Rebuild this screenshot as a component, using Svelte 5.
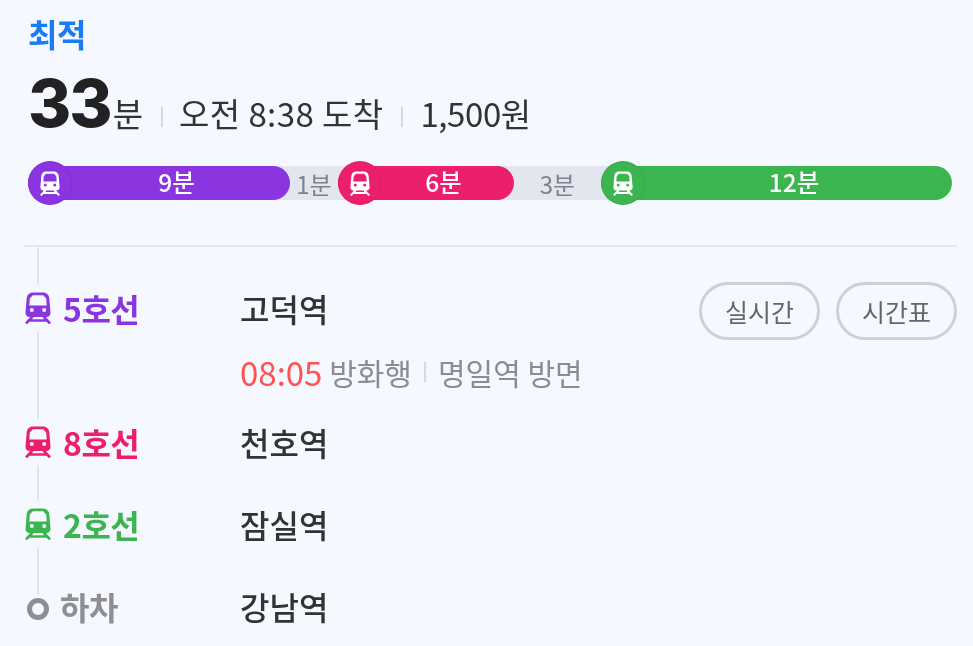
<script>
  const segments = [
    { kind: 'ride', label: '9분', color: '#8a35e0', width: 262 },
    { kind: 'walk', label: '1분', width: 48 },
    { kind: 'ride', label: '6분', color: '#ec1f6e', width: 176 },
    { kind: 'walk', label: '3분', width: 87 },
    { kind: 'ride', label: '12분', color: '#3bb54f', width: 351 }
  ];
</script>

{#snippet train()}
  <svg class="train" viewBox="0 0 26 32" aria-hidden="true">
    <path fill="currentColor" fill-rule="evenodd" d="M8 0.500h10c3.600 0 6 2.400 6.300 6L25.500 20.500c0.100 2.600-1.500 4.500-4 4.500H4.500c-2.500 0-4.100-1.900-4-4.500L1.700 6.500C2 2.900 4.400 0.500 8 0.500zM7.800 3.300 4.800 6.500 4.300 13.500H21.700L21.200 6.500 18.200 3.300zM6.800 16a2 2 0 1 0 0 4 2 2 0 0 0 0-4zM19.200 16a2 2 0 1 0 0 4 2 2 0 0 0 0-4z"/>
    <path fill="none" stroke="currentColor" stroke-width="2.600" d="M7.500 24.500 1 31.500M18.500 24.500l6.500 7M4.500 28.500h17"/>
  </svg>
{/snippet}

<main class="page">
  <div class="tag">최적</div>

  <div class="summary">
    <strong class="minutes">33</strong><span class="unit">분</span>
    <i class="sep first"></i>
    <span class="arrival">오전 8:38 도착</span>
    <i class="sep"></i>
    <span class="price">1,500원</span>
  </div>

  <div class="bar">
    <div class="track"></div>
    {#each segments as seg}
      {#if seg.kind === 'ride'}
        <div class="ride" style="width:{seg.width}px;background:{seg.color}">
          <span class="badge" style="background:{seg.color}">{@render train()}</span>
          <span class="ride-label">{seg.label}</span>
        </div>
      {:else}
        <div class="walk" style="width:{seg.width}px">{seg.label}</div>
      {/if}
    {/each}
  </div>

  <div class="route">
    <div class="line"></div>

    <div class="row first-row">
      <div class="lane violet"><span class="mark">{@render train()}</span><b>5호선</b></div>
      <div class="station">고덕역</div>
      <div class="actions">
        <button>실시간</button>
        <button>시간표</button>
      </div>
    </div>
    <div class="detail">
      <span class="time">08:05</span> 방화행<i class="sep small"></i>명일역 방면
    </div>

    <div class="row r8">
      <div class="lane pink"><span class="mark">{@render train()}</span><b>8호선</b></div>
      <div class="station">천호역</div>
    </div>
    <div class="row r2">
      <div class="lane green"><span class="mark">{@render train()}</span><b>2호선</b></div>
      <div class="station">잠실역</div>
    </div>
    <div class="row r0">
      <div class="lane gray"><span class="mark ring-wrap"><span class="ring"></span></span><b>하차</b></div>
      <div class="station">강남역</div>
    </div>
  </div>
</main>

<style>
  :global(body) {
    margin: 0;
    background: #f5f8ff;
  }
  .page {
    box-sizing: border-box;
    width: 973px;
    height: 646px;
    overflow: hidden;
    padding: 12px 16px 0 24px;
    font-family: "Noto Sans CJK KR", "Noto Sans", sans-serif;
    color: #333;
    background: #f5f8ff;
    filter: blur(0.45px);
  }
  .tag {
    margin-left: 4px;
    height: 42px;
    line-height: 42px;
    font-size: 32px;
    font-weight: 700;
    letter-spacing: -0.5px;
    color: #1a7cf5;
  }
  .summary {
    display: flex;
    align-items: baseline;
    margin: 18px 0 0 4px;
    height: 62px;
    font-size: 33px;
    line-height: 62px;
  }
  .minutes {
    font-family: Inter, "Noto Sans", sans-serif;
    font-size: 66px;
    font-weight: 800;
    letter-spacing: -2px;
    color: #222;
  }
  .unit {
    margin-left: 2px;
  }
  .arrival {
    letter-spacing: 0.4px;
  }
  .price {
    letter-spacing: -0.4px;
  }
  .sep {
    display: inline-block;
    width: 2px;
    height: 20px;
    margin: 0 17px 0 18px;
    background: #d5d8de;
    align-self: center;
    position: relative;
    top: 14px;
  }
  .sep.first {
    margin-right: 16px;
  }
  .bar {
    position: relative;
    display: flex;
    margin: 32px 0 0 4px;
    width: 924px;
    height: 34px;
  }
  .track {
    position: absolute;
    left: 22px;
    width: 580px;
    top: 0;
    bottom: 0;
    background: #e2e6ee;
  }
  .ride {
    position: relative;
    display: flex;
    align-items: center;
    justify-content: center;
    box-sizing: border-box;
    padding-left: 35px;
    border-radius: 17px;
    color: #fff;
    font-size: 24.5px;
    font-weight: 500;
  }
  .ride-label {
    line-height: 32px;
    margin-bottom: 2px;
  }
  .badge {
    position: absolute;
    left: 0;
    top: -5px;
    width: 44px;
    height: 44px;
    box-sizing: border-box;
    border: 1px solid rgba(0, 0, 0, 0.06);
    border-radius: 50%;
    display: flex;
    align-items: center;
    justify-content: center;
  }
  .badge .train {
    width: 20px;
    height: 25px;
  }
  .walk {
    position: relative;
    display: flex;
    align-items: center;
    justify-content: center;
    color: #7d828c;
    font-size: 24px;
  }
  .route {
    position: relative;
    margin-top: 45px;
    border-top: 2px solid #e4e7ee;
    height: 400px;
  }
  .line {
    position: absolute;
    left: 13px;
    top: 0;
    width: 2px;
    height: 352px;
    background: #e0e4ec;
  }
  .row {
    position: relative;
    display: flex;
    align-items: center;
    height: 60px;
  }
  .first-row {
    margin-top: 31px;
  }
  .r8 {
    margin-top: 20px;
  }
  .r2, .r0 {
    margin-top: 22px;
  }
  .lane {
    display: flex;
    align-items: center;
    width: 216px;
    font-size: 32px;
  }
  .lane b {
    font-weight: 700;
    letter-spacing: -0.5px;
  }
  .mark {
    display: flex;
    align-items: center;
    justify-content: center;
    width: 28px;
    height: 46px;
    margin-right: 11px;
    background: #f5f8ff;
  }
  .mark .train {
    width: 26px;
    height: 32px;
  }
  .violet { color: #8a35e0; }
  .pink { color: #ec1f6e; }
  .green { color: #3bb54f; }
  .gray { color: #8e8e93; }
  .ring-wrap {
    width: 28px;
    height: 28px;
    margin: 6px 8px 0 0;
  }
  .ring {
    box-sizing: border-box;
    width: 22px;
    height: 22px;
    border: 5px solid #8e8e93;
    border-radius: 50%;
  }
  .station {
    font-size: 32px;
    font-weight: 500;
    color: #333;
  }
  .actions {
    margin-left: auto;
    margin-top: 6px;
    display: flex;
    gap: 16px;
  }
  button {
    box-sizing: border-box;
    width: 121px;
    height: 58px;
    padding: 0;
    background: transparent;
    border: 3px solid #cdd0d4;
    border-radius: 29px;
    font-family: inherit;
    font-size: 25px;
    color: #666;
  }
  .detail {
    display: flex;
    align-items: center;
    position: relative;
    margin: 14px 0 0 216px;
    height: 40px;
    font-size: 30px;
    color: #8a8d92;
    white-space: pre;
  }
  .time {
    color: #ff5252;
    font-size: 33px;
  }
  .sep.small {
    margin: 0 12px;
    top: 0;
  }
</style>
